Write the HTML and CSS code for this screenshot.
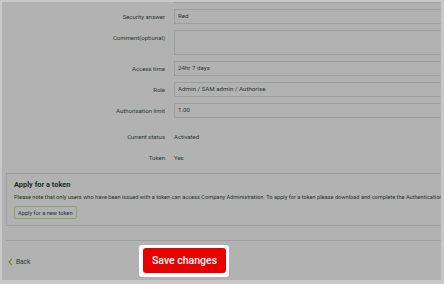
FILE: index.html
```html
<!DOCTYPE html>
<html lang="en">
<head>
  <meta charset="UTF-8">
  <meta name="viewport" content="width=device-width, initial-scale=1.0">
  <title>Edit user</title>
  <link rel="stylesheet" href="styles.css">
</head>
<body>
<div class="page">
  <!-- user details form -->
  <div class="user-form">
    <div class="form-row prev-row">
      <div class="form-label"></div>
      <div class="form-input"></div>
    </div>
    <div class="form-row">
      <div class="form-label">Security answer</div>
      <div class="form-input">Red</div>
    </div>
    <div class="form-row">
      <div class="form-label top">Comment(optional)</div>
      <div class="form-input textarea"></div>
    </div>
    <div class="form-row">
      <div class="form-label">Access time</div>
      <div class="form-input">24hr 7 days</div>
    </div>
    <div class="form-row">
      <div class="form-label">Role</div>
      <div class="form-input">Admin / SAM admin / Authorise</div>
    </div>
    <div class="form-row">
      <div class="form-label">Authorisation limit</div>
      <div class="form-input">1.00</div>
    </div>
    <div class="form-row static first-static">
      <div class="form-label">Current status</div>
      <div class="form-value">Activated</div>
    </div>
    <div class="form-row static">
      <div class="form-label">Token</div>
      <div class="form-value">Yes</div>
    </div>
  </div>

  <!-- token panel -->
  <div class="token-panel">
    <h3>Apply for a token</h3>
    <p>Please note that only users who have been issued with a token can access Company Administration. To apply for a token please download and complete the Authentication form.</p>
    <button class="token-btn">Apply for a new token</button>
  </div>

  <div class="separator"></div>

  <div class="footer">
    <a class="back-link" href="#">
      <svg width="5" height="8" viewBox="0 0 5 8"><path d="M4 0.8 L1 4 L4 7.2" fill="none" stroke="#9cc450" stroke-width="1.1"/></svg>
      Back
    </a>
    <div class="spotlight">
      <button class="save-btn">Save changes</button>
    </div>
  </div>

  <div class="overlay"></div>
</div>
</body>
</html>
```

FILE: styles.css
```css
* {
  margin: 0;
  padding: 0;
  box-sizing: border-box;
}

html, body {
  height: 100%;
}

body {
  font-family: Roboto, "Liberation Sans", sans-serif;
  background-color: #c8c8c8;
  padding: 2px 3px 4px 2px;
  overflow: hidden;
}

.page {
  position: relative;
  height: 100%;
  background-color: #fff;
  overflow: hidden;
  padding: 0 0 0 4px;
  color: #42524a;
}

/* form */
.user-form {
  display: flex;
  flex-direction: column;
  gap: 6px;
}

.form-row {
  display: flex;
  gap: 9px;
  width: 470px;
}

.prev-row {
  margin-top: -14px;
}

.form-label {
  width: 159px;
  flex-shrink: 0;
  text-align: right;
  font-size: 6px;
  line-height: 15px;
}

.form-label.top {
  line-height: 8px;
  padding-top: 4px;
}

.form-input {
  flex: 1;
  height: 15px;
  border: 1px solid #e2e2e2;
  font-size: 6.2px;
  line-height: 13px;
  padding-left: 3px;
}

.form-input.textarea {
  height: 25px;
}

.form-row.static {
  height: 15px;
}

.form-row.first-static {
  margin-top: 5px;
}

.form-value {
  font-size: 6px;
  line-height: 15px;
}

/* token panel */
.token-panel {
  margin-top: 8px;
  width: 470px;
  border: 1px solid #e2e2e2;
  padding: 6px 7px 6px 7px;
}

.token-panel h3 {
  font-size: 7.4px;
  line-height: 10px;
  font-weight: bold;
  color: #2f3d36;
}

.token-panel p {
  margin-top: 3px;
  font-size: 5.65px;
  line-height: 8px;
  white-space: nowrap;
  color: #3a4a44;
}

.token-btn {
  margin-top: 5px;
  display: block;
  height: 13px;
  padding: 0 3px;
  font-family: inherit;
  font-size: 5.7px;
  color: #3a4a44;
  background-color: #fff;
  border: 1.5px solid #d0e2a0;
  border-radius: 2px;
}

.separator {
  margin-top: 14px;
  width: 470px;
  border-top: 1px solid #e2e2e2;
}

/* footer */
.footer {
  display: flex;
  align-items: center;
  margin-top: 4px;
  padding-left: 2px;
}

.back-link {
  width: 131px;
  display: flex;
  align-items: center;
  gap: 3px;
  font-size: 6.5px;
  color: #42524a;
  text-decoration: none;
  margin-top: 1px;
}

.spotlight {
  position: relative;
  z-index: 10;
  background-color: #fff;
  border-radius: 3px;
  padding: 3px 3px 4px 4px;
}

.save-btn {
  display: block;
  width: 83px;
  height: 25px;
  border: none;
  border-radius: 3px;
  background-color: #e60000;
  color: #fff;
  font-family: inherit;
  font-size: 10.5px;
  font-weight: 500;
}

.overlay {
  position: absolute;
  inset: 0;
  background-color: rgba(0, 0, 0, 0.3);
  z-index: 5;
}
```
